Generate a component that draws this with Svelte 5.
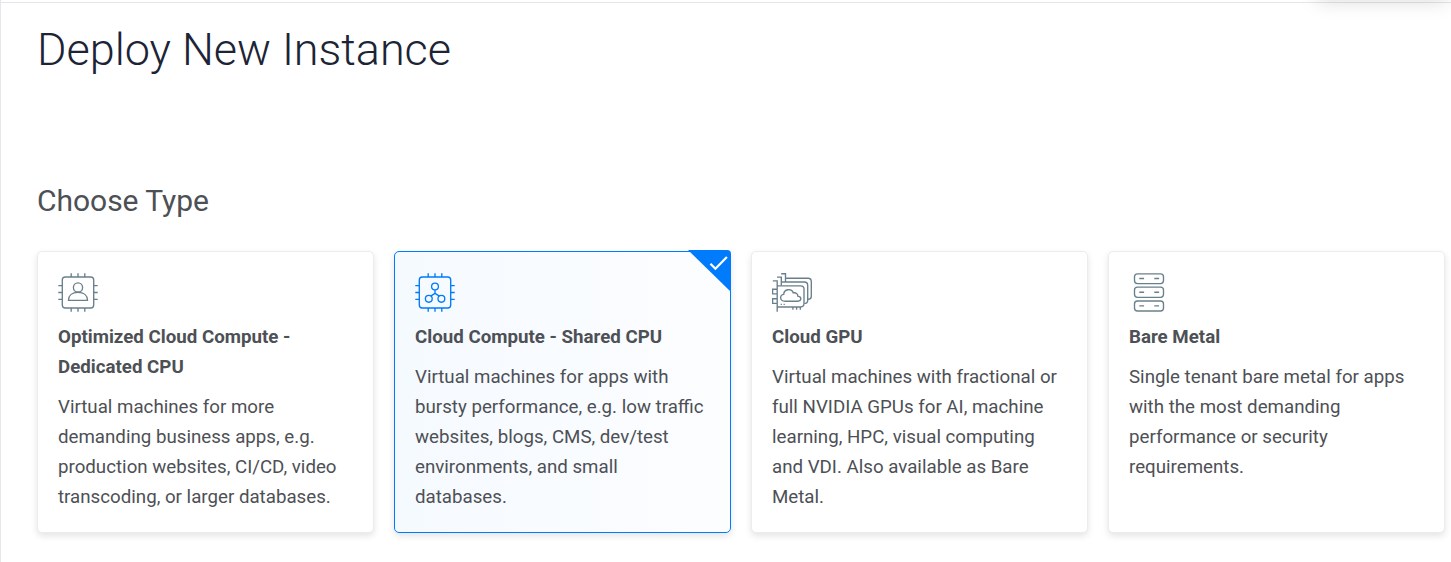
<script>
  const types = [
    { icon: 'user', title: 'Optimized Cloud Compute - Dedicated CPU', text: 'Virtual machines for more demanding business apps, e.g. production websites, CI/CD, video transcoding, or larger databases.' },
    { icon: 'shared', title: 'Cloud Compute - Shared CPU', text: 'Virtual machines for apps with bursty performance, e.g. low traffic websites, blogs, CMS, dev/test environments, and small databases.' },
    { icon: 'gpu', title: 'Cloud GPU', text: 'Virtual machines with fractional or full NVIDIA GPUs for AI, machine learning, HPC, visual computing and VDI. Also available as Bare Metal.' },
    { icon: 'metal', title: 'Bare Metal', text: 'Single tenant bare metal for apps with the most demanding performance or security requirements.' }
  ];
  let selected = $state(1);
</script>

<div class="page">
  <div class="menu-shadow"></div>
  <h1>Deploy New Instance</h1>
  <h2>Choose Type</h2>
  <div class="cards">
    {#each types as type, i}
      <button class="card" class:active={selected === i} onclick={() => (selected = i)}>
        <svg class="icon" viewBox="0 0 40 40" width="40" height="40" aria-hidden="true">
          {#if type.icon === 'user' || type.icon === 'shared'}
            <rect x="4.3" y="4" width="31.4" height="31" rx="3" />
            <path d="M13.2 4V.3M20 4V.3M26.8 4V.3M13.2 35V38.7M20 35V38.7M26.8 35V38.7M4 12.6H.3M4 19.5H.3M4 26.4H.3M36 12.6h3.7M36 19.5h3.7M36 26.4h3.7" />
            {#if type.icon === 'user'}
              <circle cx="20" cy="14.4" r="4.6" />
              <path d="M10.5 27.3c0-5 3.7-8 9.5-8s9.5 3 9.5 8z" />
            {:else}
              <circle cx="20" cy="13.5" r="3.4" />
              <circle cx="13.8" cy="25.8" r="3.4" />
              <circle cx="26.4" cy="25.8" r="3.4" />
              <path d="M20 17v3.4l-4.3 2.7M20 20.4l4.4 2.7" />
            {/if}
          {:else if type.icon === 'gpu'}
            <path d="M.8 7.8h4.4v31M5.2 12.8h23.5q3.3 0 3.3 3.3v14.5q0 3.4-3.3 3.4H5.2M5.2 16.2H.6v4.6h4.6M5.2 25.7H.6v4.7h4.6" />
            <path d="M5 4.1h4.3v8.5M9.3 9h23q3.4 0 3.4 3.4v15q0 3-3.4 3M9.2.7h4.3v8M13.5 5.2h22.6q3.2 0 3.2 3.2v15.2q0 2.7-3.2 2.7M20.9 34v2.7M24.6 34v2.7M28.3 34v2.7" />
            <path d="M13 28.2c-5.4 0-5.7-6.3-1.3-6.8.1-5.3 8-6.6 9.6-1.5 2.8-.5 4.5 1 4.5 3.2 4.2.5 3.8 5.1.1 5.1z" />
            <path d="M8.7 31.3h1.2M11.6 31.3h1.2" />
          {:else}
            <rect x="5.5" y="0.8" width="29" height="9.8" rx="3" />
            <rect x="5.5" y="14.1" width="29" height="10.2" rx="3" />
            <rect x="5.5" y="28" width="29" height="10" rx="3" />
            <path d="M10.3 5.5h4.8M25.3 5.5h4.8M10.3 19.2h4.8M25.3 19.2h4.8M10.3 32.9h4.8M25.3 32.9h4.8" />
          {/if}
        </svg>
        <strong>{type.title}</strong>
        <span class="description">{type.text}</span>
        {#if selected === i}
          <svg class="corner" viewBox="0 0 43 42" width="43" height="42" aria-hidden="true">
            <path class="flag" d="M0 0h39q4 0 4 4v38z" />
            <path class="check" d="m22.4 13.8 5 4.9L38.9 7" />
          </svg>
        {/if}
      </button>
    {/each}
  </div>
</div>

<style>
  :global(body) { background: #fff; overflow: hidden; }
  .page {
    position: relative;
    box-sizing: border-box;
    width: 1451px;
    height: 562px;
    padding: 2px 6px 0 36px;
    border-left: 1px solid #e5e6eb;
    font-family: Roboto, sans-serif;
    color: #4d5055;
    overflow: hidden;
  }
  .page::before {
    content: "";
    position: absolute;
    inset: 2px 0 auto 0;
    height: 1px;
    background: #e5e6eb;
  }
  .menu-shadow {
    position: absolute;
    top: -20px;
    left: 1317px;
    width: 129px;
    height: 20px;
    box-shadow: 0 1px 20px rgba(0, 15, 10, .15);
  }
  h1 {
    margin: 0;
    padding-top: 18px;
    font-size: 45px;
    line-height: 60px;
    font-weight: 300;
    letter-spacing: -.03px;
    color: #1c2436;
  }
  h2 {
    margin: 101px 0 0;
    font-size: 30px;
    line-height: 40px;
    font-weight: 400;
    letter-spacing: -.03px;
  }
  .cards {
    display: grid;
    grid-template-columns: repeat(4, 337px);
    gap: 20px;
    margin-top: 30px;
  }
  .card {
    position: relative;
    box-sizing: border-box;
    display: flex;
    flex-direction: column;
    align-items: flex-start;
    height: 282px;
    padding: 21px 20px 0;
    border: 1px solid #ececee;
    border-radius: 5px;
    background: #fff;
    box-shadow: 0 3px 7px rgba(0, 0, 0, .11);
    font: inherit;
    font-size: 18.72px;
    line-height: 30px;
    color: #4d5055;
    text-align: left;
  }
  .card.active {
    border-color: #007bfc;
    background: linear-gradient(90deg, #f5faff, #fcfdff);
  }
  .icon {
    flex: none;
    margin-bottom: 9px;
    fill: none;
    stroke: #69808c;
    stroke-width: 1.35;
  }
  .active .icon { stroke: #007bfc; }
  strong {
    font-weight: 700;
    margin-bottom: 10px;
  }
  .corner {
    position: absolute;
    top: -2px;
    right: -1px;
  }
  .flag { fill: #007bfc; }
  .check { fill: none; stroke: #fff; stroke-width: 2.3; }
</style>
